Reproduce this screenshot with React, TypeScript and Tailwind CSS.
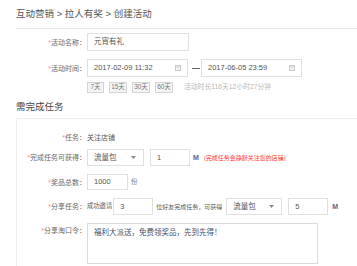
import React from "react";

const Cal = () => (
  <svg width="6" height="6" viewBox="0 0 6 6" className="shrink-0">
    <rect x="0.5" y="0.5" width="5" height="5" fill="none" stroke="#c8c8c8" strokeWidth="1" />
    <line x1="0.5" y1="2" x2="5.5" y2="2" stroke="#c8c8c8" strokeWidth="1" />
    <line x1="3" y1="2" x2="3" y2="5.5" stroke="#d8d8d8" strokeWidth="0.8" />
  </svg>
);

const Caret = () => (
  <svg width="5" height="3" viewBox="0 0 5 3" className="shrink-0">
    <polygon points="0,0 5,0 2.5,3" fill="#888" />
  </svg>
);

const Label = ({ text, w }: { text: string; w: string }) => (
  <div className={`${w} shrink-0 text-right text-[7px] leading-none text-[#666]`}>
    <span className="text-[#f88]">*</span>
    {text}：
  </div>
);

export default function App() {
  return (
    <div className="w-[357px] h-[266px] overflow-hidden bg-white [font-family:'Liberation_Sans','Noto_Sans_CJK_SC',sans-serif]">
      <div className="h-[28px] flex items-center pl-[16px] text-[9.5px] leading-none text-[#555]">
        互动营销 &gt; 拉人有奖 &gt; 创建活动
      </div>
      <div className="ml-[16px] border-t border-[#e8e8e8]" />

      <div className="flex items-center mt-[4px] h-[18px]">
        <Label text="活动名称" w="w-[86px]" />
        <div className="ml-[1px] w-[102px] h-[18px] border border-[#e0e0e0] flex items-center pl-[6px] text-[7.5px] leading-none text-[#555]">
          元宵有礼
        </div>
      </div>

      <div className="flex items-center mt-[8px] h-[18px]">
        <Label text="活动时间" w="w-[86px]" />
        <div className="ml-[1px] w-[101px] h-[18px] border border-[#e0e0e0] flex items-center justify-between pl-[6px] pr-[6px] text-[7.5px] leading-none text-[#555]">
          <span>2017-02-09 11:32</span>
          <Cal />
        </div>
        <div className="ml-[4px] mr-[1px] w-[8px] h-[1px] bg-[#666]" />
        <div className="w-[101px] h-[18px] border border-[#e0e0e0] flex items-center justify-between pl-[6px] pr-[6px] text-[7.5px] leading-none text-[#555]">
          <span>2017-06-05 23:59</span>
          <Cal />
        </div>
      </div>

      <div className="flex items-center mt-[5px] h-[11px] pl-[87px]">
        <div className="w-[17px] h-[11px] border border-[#d4d4d4] bg-[#f4f4f4] flex items-center justify-center text-[6.5px] leading-none text-[#777]">7天</div>
        <div className="ml-[5px] w-[18px] h-[11px] border border-[#d4d4d4] bg-[#f4f4f4] flex items-center justify-center text-[6.5px] leading-none text-[#777]">15天</div>
        <div className="ml-[5px] w-[18px] h-[11px] border border-[#d4d4d4] bg-[#f4f4f4] flex items-center justify-center text-[6.5px] leading-none text-[#777]">30天</div>
        <div className="ml-[5px] w-[18px] h-[11px] border border-[#d4d4d4] bg-[#f4f4f4] flex items-center justify-center text-[6.5px] leading-none text-[#777]">60天</div>
        <div className="ml-[11px] text-[6.8px] leading-none text-[#b8b8b8]">活动时长116天12小时27分钟</div>
      </div>

      <div className="mt-[7px] h-[14px] flex items-center pl-[16px] text-[9.5px] leading-none text-[#444]">
        需完成任务
      </div>

      <div className="mt-[4px] ml-[16px] border-l border-t border-[#eeeeee] h-[200px]">
        <div className="flex items-center pt-[12px] h-[24px]">
          <Label text="任务" w="w-[69px]" />
          <div className="ml-[1px] text-[7px] leading-none text-[#555]">关注店铺</div>
        </div>

        <div className="flex items-center mt-[6px] h-[17px]">
          <Label text="完成任务可获得" w="w-[69px]" />
          <div className="ml-[1px] w-[57px] h-[17px] border border-[#e0e0e0] flex items-center justify-between pl-[6px] pr-[7px] text-[7.5px] leading-none text-[#555]">
            <span>流量包</span>
            <Caret />
          </div>
          <div className="ml-[6px] w-[40px] h-[17px] border border-[#e0e0e0] flex items-center pl-[6px] text-[7.5px] leading-none text-[#555]">
            1
          </div>
          <div className="ml-[3px] text-[7px] font-semibold leading-none text-[#6a5a88]">M</div>
          <div className="ml-[5px] text-[6px] leading-none text-[#f33]">(完成任务会静默关注您的店铺)</div>
        </div>

        <div className="flex items-center mt-[8px] h-[16px]">
          <Label text="奖品总数" w="w-[69px]" />
          <div className="ml-[1px] w-[41px] h-[16px] border border-[#e0e0e0] flex items-center pl-[6px] text-[7.5px] leading-none text-[#555]">
            1000
          </div>
          <div className="ml-[3px] text-[6.5px] leading-none text-[#777]">份</div>
        </div>

        <div className="flex items-center mt-[8px] h-[17px]">
          <Label text="分享任务" w="w-[69px]" />
          <div className="ml-[1px] text-[6.3px] leading-none text-[#555]">成功邀请</div>
          <div className="ml-[1px] w-[40px] h-[17px] border border-[#e0e0e0] flex items-center pl-[6px] text-[7.5px] leading-none text-[#555]">
            3
          </div>
          <div className="ml-[3px] text-[6px] leading-none text-[#555]">位好友完成任务，可获得</div>
          <div className="ml-[4px] w-[56px] h-[17px] border border-[#e0e0e0] flex items-center justify-between pl-[6px] pr-[7px] text-[7.5px] leading-none text-[#555]">
            <span>流量包</span>
            <Caret />
          </div>
          <div className="ml-[6px] w-[40px] h-[17px] border border-[#e0e0e0] flex items-center pl-[6px] text-[7.5px] leading-none text-[#555]">
            5
          </div>
          <div className="ml-[4px] text-[7px] font-semibold leading-none text-[#6a5a88]">M</div>
        </div>

        <div className="flex items-start mt-[8px]">
          <div className="pt-[4px]">
            <Label text="分享淘口令" w="w-[69px]" />
          </div>
          <div className="ml-[1px] w-[231px] h-[41px] border border-[#dcdcdc] pl-[6px] pt-[4px] text-[7.5px] leading-[9px] text-[#4a5068]">
            福利大派送，免费领奖品，先到先得！
          </div>
        </div>
      </div>
    </div>
  );
}
